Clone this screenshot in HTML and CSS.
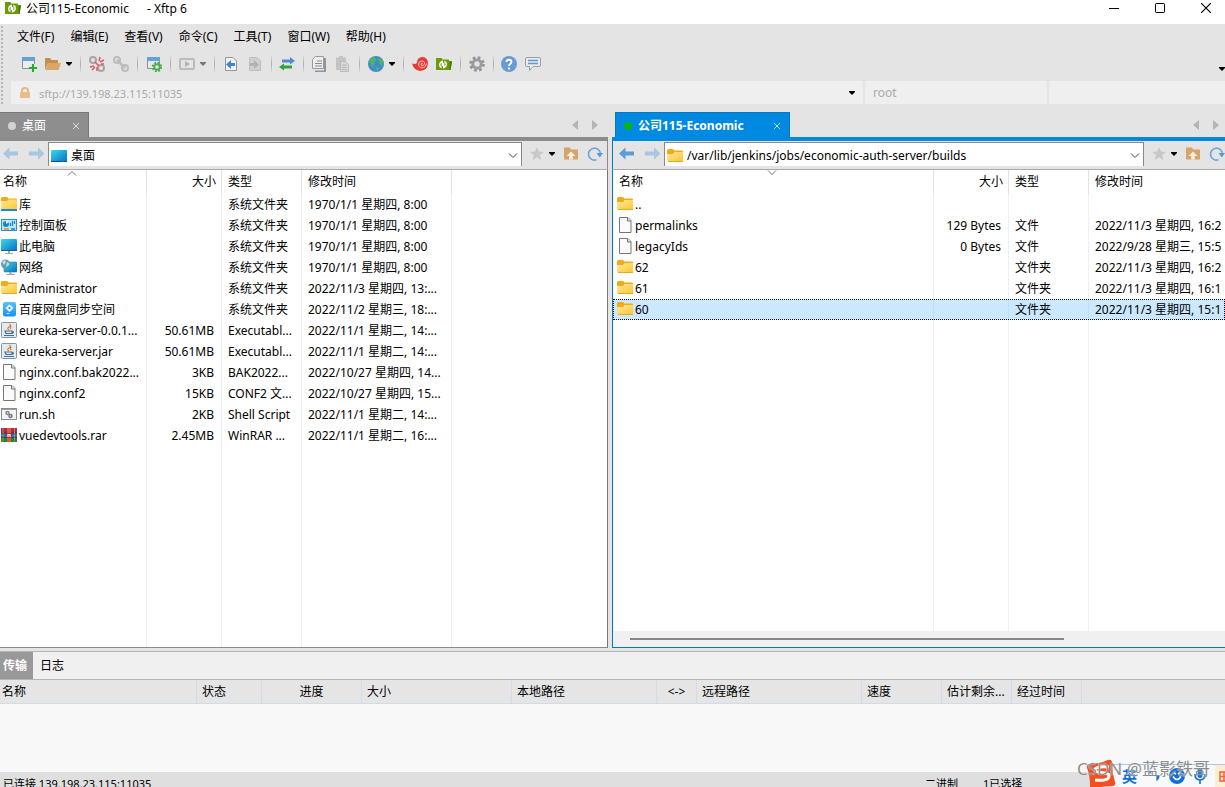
FILE: index.html
```html
<!DOCTYPE html>
<html lang="zh-CN">
<head>
<meta charset="utf-8">
<title>公司115-Economic - Xftp 6</title>
<link rel="stylesheet" href="styles.css">
</head>
<body>
<svg class="sprite" aria-hidden="true">
  <defs>
    <linearGradient id="g-folder" x1="0" y1="0" x2="1" y2="1"><stop offset="0" stop-color="#ffe9a0"/><stop offset="1" stop-color="#ffc62e"/></linearGradient>
    <linearGradient id="g-screen" x1="0" y1="0" x2="1" y2="1"><stop offset="0" stop-color="#35dcec"/><stop offset="1" stop-color="#0b6cc4"/></linearGradient>
    <linearGradient id="g-pan" x1="0" y1="0" x2="0" y2="1"><stop offset="0" stop-color="#55c4fb"/><stop offset="1" stop-color="#1593f5"/></linearGradient>
  </defs>
  <symbol id="logo" viewBox="0 0 16 16"><path d="M0 2h5.500l1 1.500h6.500V5h3l-1.500 9H0z" fill="#6b9a0c"/><path d="M13.500 5.500H16L14.500 14h-1z" fill="#4c7600"/><path d="M5.600 11.500Q3.500 10.500 3.700 8.300 4 6 6.300 5.300V10M8.400 5.500q2.100 1 1.900 3.200-.300 2.300-2.600 3V7" fill="none" stroke="#fff" stroke-width="1.400"/></symbol>
  <symbol id="new" viewBox="0 0 16 16"><path d="M1.500 1.500h12v11h-12z" fill="#ececec" stroke="#8c9298"/><path d="M1 1h13v4H1z" fill="#5fa2dc"/><path d="M12 8v8M8 12h8" stroke="#e4e4e4" stroke-width="4"/><path d="M12 8v8M8 12h8" stroke="#1fae2e" stroke-width="2"/></symbol>
  <symbol id="open" viewBox="0 0 16 16"><path d="M0 2h5l1.500 2H13v3H3L0 14z" fill="#c48e4c"/><path d="M3.200 7H16l-2.500 7H.500z" fill="#dba767"/></symbol>
  <symbol id="chain" viewBox="0 0 16 16"><g fill="none" stroke="#bcbcbc" stroke-width="2"><circle cx="4" cy="4" r="3"/><circle cx="12" cy="12" r="3"/><path d="M4 4l8 8" stroke-width="2.500"/></g></symbol>
  <symbol id="unchain" viewBox="0 0 16 16"><g fill="none" stroke="#a5a5a5" stroke-width="2"><circle cx="4" cy="4" r="3"/><circle cx="12" cy="12" r="3"/></g><path d="M6 6l4 4M10 5l1-4M11 6l4-2M12 8h3M5 10l-4 1M6 11l-3 3M8 11v4" stroke="#e75555" stroke-width="1.500"/></symbol>
  <symbol id="props" viewBox="0 0 16 16"><path d="M1.500 1.500h12v11h-12z" fill="#e8e8e8" stroke="#8c9298"/><path d="M1 1h13v4H1z" fill="#5fa2dc"/><circle cx="11" cy="11" r="4" fill="none" stroke="#4eaa4e" stroke-width="2.500" stroke-dasharray="1.800 1.340"/><circle cx="11" cy="11" r="2.700" fill="#e8e8e8" stroke="#4eaa4e" stroke-width="1.800"/></symbol>
  <symbol id="play" viewBox="0 0 16 16"><rect x="1" y="3" width="14" height="10" rx="1" fill="none" stroke="#bcbcbc" stroke-width="2"/><path d="M6 5l5 3-5 3z" fill="#b4b4b4"/></symbol>
  <symbol id="pageleft" viewBox="0 0 16 16"><path d="M2.500 1.500H10l3.500 3.500v9.500h-11z" fill="#f1f1f1" stroke="#8f969c"/><path d="M3 8.500l5-4.500v3h4v3H8v3z" fill="#3b86d4"/></symbol>
  <symbol id="pageright" viewBox="0 0 16 16"><path d="M2.500 1.500H10l3.500 3.500v9.500h-11z" fill="#cfcfcf" stroke="#bebebe"/><path d="M12 8.500L7 4v3H3v3h4v3z" fill="#b3b3b3"/></symbol>
  <symbol id="swap" viewBox="0 0 16 16"><path d="M3 3.500h8V1l5 4-5 3.500V6.500H3z" fill="#4c8ed0"/><path d="M13 9.500H5V7.500L0 11l5 3.500v-2h8z" fill="#2fa536"/></symbol>
  <symbol id="copy" viewBox="0 0 16 16"><path d="M5 3h9v12.500H4" fill="none" stroke="#8f969c" stroke-width="2"/><path d="M4.500.500h8v12h-11v-9z" fill="#eee" stroke="#949a9f"/><path d="M6 5h5M4 7.500h7M4 10h7" stroke="#888"/></symbol>
  <symbol id="paste" viewBox="0 0 16 16"><path d="M1 1.500h10V14H1zM4 0h4v3H4z" fill="#c4c4c4"/><path d="M5.500 5.500h5l3 3v7h-8z" fill="#d8d8d8" stroke="#bbb"/><path d="M7 9h5M7 11.500h5M7 13.500h5" stroke="#b8b8b8"/></symbol>
  <symbol id="globe" viewBox="0 0 16 16"><circle cx="8" cy="8" r="8" fill="#4289d0"/><path d="M2 3l3-2 3 1 .500 2-2.500 2 1 2-2 1 1 3-2-1-2.500-4zM10 2l4 1 1.500 4-2 3-2-2-1-3zM8 11l3 .500v2l-2 1.500-1.500-2z" fill="#49b56a"/></symbol>
  <symbol id="swirl" viewBox="0 0 16 16"><path d="M0 7.500q3 1 5-.500Q5 1 10.500 1 16 1.500 16 7.500 15.500 14.500 8 15 2 14.500 0 7.500z" fill="#ec3934"/><path d="M10.500 7.500q-1-1-1.500.500 0 2 2 1.500 2-1 1.500-3-1-2-3.500-1.500Q6 6 6.500 9q1 3.500 5 2.500 2.500-1 3-4" fill="none" stroke="#f8d5d2" stroke-width=".900"/></symbol>
  <symbol id="gear" viewBox="0 0 16 16"><circle cx="8" cy="8" r="6.300" fill="none" stroke="#909498" stroke-width="3" stroke-dasharray="2.600 2.348"/><circle cx="8" cy="8" r="4.200" fill="none" stroke="#999da1" stroke-width="3"/></symbol>
  <symbol id="help" viewBox="0 0 16 16"><circle cx="8" cy="8" r="8" fill="#679bd2"/><path d="M5.500 6c0-3 5-3 5 0 0 1.800-2.500 1.800-2.500 4M8 11.500v2" fill="none" stroke="#fff" stroke-width="1.800"/></symbol>
  <symbol id="chat" viewBox="0 0 16 16"><path d="M2 1.500h12q1.500 0 1.500 1.500v6q0 1.500-1.500 1.500H8L4.500 14.500v-4H2Q.500 10.500.500 9V3Q.500 1.500 2 1.500z" fill="#ebebeb" stroke="#999fa5"/><path d="M3 4.500h10M3 7.500h10" stroke="#6296cf" stroke-width="1.500"/></symbol>
  <symbol id="lock" viewBox="0 0 12 12"><path d="M3 6V3.500q0-2.500 3-2.500t3 2.500V6" fill="none" stroke="#dfb98a" stroke-width="2"/><rect x="1" y="5" width="10" height="6" rx="1" fill="#e9bd85"/></symbol>
  <symbol id="back" viewBox="0 0 16 16"><path d="M0 7.500L6.500 1.500v4H15v4H6.500v4z" fill="currentColor"/></symbol>
  <symbol id="fwd" viewBox="0 0 16 16"><path d="M15.500 7.500L9 1.500v4H0v4h9v4z" fill="currentColor"/></symbol>
  <symbol id="star" viewBox="0 0 16 16"><path d="M8 1l1.900 4.600 5 .300-3.900 3.200 1.300 4.900L8 11.300 3.700 14 5 9.100 1.100 5.900l5-.300z" fill="#c8c8c8"/></symbol>
  <symbol id="up" viewBox="0 0 16 16"><path d="M1 1.500h6l1 2h7v10H1z" fill="#d6a468"/><path d="M8 5.500L3.500 10h2.700v3.500h3.600V10h2.700z" fill="#f7eee2"/></symbol>
  <symbol id="refresh" viewBox="0 0 16 16"><path d="M9.500 13.800A6 6 0 1 1 13.500 8" fill="none" stroke="#6ca6d8" stroke-width="1.600"/><path d="M9.500 7H16l-3.200 4.500z" fill="#5699d5"/></symbol>
  <symbol id="folder" viewBox="0 0 16 16"><path d="M0 2.500Q0 1 1.500 1H6l1.500 1.500H15q1 0 1 1V6H0z" fill="#f0ab16"/><path d="M0 6h6l1.500-2H16v9.500H1q-1 0-1-1z" fill="url(#g-folder)"/><path d="M1 13.500h15" stroke="#e4a824"/></symbol>
  <symbol id="library" viewBox="0 0 16 16"><path d="M0 2.500Q0 1 1.500 1H6l1.500 1.500H15q1 0 1 1V6H0z" fill="#f0ab16"/><path d="M0 5h6l1.500-1.500H16V13H0z" fill="url(#g-folder)"/><path d="M0 13h16v2H0z" fill="#1b8ad5"/></symbol>
  <symbol id="panel" viewBox="0 0 16 16"><rect x=".500" y="2.500" width="15" height="11" fill="#b6e8fb" stroke="#2d91cb"/><circle cx="5" cy="7" r="3" fill="#1583cb"/><path d="M5 7V3.500L8 5z" fill="#fff"/><path d="M9.500 9V6M11.500 9V4M13.500 7V4" stroke="#1583cb" stroke-width="1.200"/><path d="M3 12h5" stroke="#ee8a25" stroke-width="1.500"/><path d="M10 12h4" stroke="#1583cb" stroke-width="1.500"/></symbol>
  <symbol id="pc" viewBox="0 0 16 16"><rect y="1" width="16" height="12" rx="1" fill="url(#g-screen)"/><path d="M0 12.500h16" stroke="#15619e"/><path d="M7 13h2v2h3v1H4v-1h3z" fill="#9aa9b5"/></symbol>
  <symbol id="desktop" viewBox="0 0 16 12"><rect width="16" height="12" rx="1" fill="url(#g-screen)"/><path d="M0 11.500h10M11 11.500h1M13 11.500h1M15 11.500h1" stroke="#0a4f8e"/></symbol>
  <symbol id="net" viewBox="0 0 16 16"><rect x="3" y="3" width="13" height="10" rx="1" fill="url(#g-screen)" stroke="#126a98" stroke-width=".500"/><path d="M8.500 13h2v2h3v1h-8v-1h3z" fill="#92a1ac"/><circle cx="4.500" cy="5" r="4.500" fill="#5d9db8"/><path d="M1 3l3-2 1 2-2 3zM6 3l2 1v2L5 8z" fill="#c4dfe8"/></symbol>
  <symbol id="pan" viewBox="0 0 16 16"><rect x="2" y="1" width="13" height="14.500" rx="2" fill="url(#g-pan)"/><path d="M8.500 3.500l4 3.500-4 4-4-4z" fill="#fff"/><circle cx="8.500" cy="7" r="1.200" fill="#2c9cec"/><path d="M5.500 12.500h3" stroke="#c7e9ff"/></symbol>
  <symbol id="jar" viewBox="0 0 16 16"><rect x=".500" y=".500" width="15" height="15" rx="1" fill="#e2eaf0" stroke="#8095a6"/><path d="M8.500 2q2 1.500-.500 3T8 8M10.500 4q-2 1.200-.500 3" fill="none" stroke="#e27a2d" stroke-width="1.200"/><path d="M4 9h7v2.500H5zM11 9.500q3 0 0 2M3 13.500h10" fill="none" stroke="#46708f" stroke-width="1.200"/></symbol>
  <symbol id="file" viewBox="0 0 16 16"><path d="M2.500.500H11l3 3v12H2.500z" fill="#fafafa" stroke="#777"/><path d="M10.500.500V4H14" fill="#ddd" stroke="#777"/></symbol>
  <symbol id="sh" viewBox="0 0 16 16"><rect x=".500" y="2.500" width="15" height="11" fill="#f4f4f4" stroke="#8d8d8d"/><path d="M0 3h16" stroke="#888" stroke-width="1.500"/><circle cx="6.500" cy="7" r="1.500" fill="none" stroke="#888" stroke-width="1.500"/><circle cx="9.500" cy="10" r="1.500" fill="none" stroke="#68798b" stroke-width="1.500"/></symbol>
  <symbol id="rar" viewBox="0 0 16 16"><path d="M0 1h16v5H0z" fill="#a52d57"/><path d="M0 6h16v4.500H0z" fill="#3b62bd"/><path d="M0 10.500h16V15H0z" fill="#23803a"/><path d="M0 6h16M0 10.500h16" stroke="#262640" stroke-width=".800"/><path d="M2 1.500v13M13.500 1.500v13" stroke="#d9a83c" stroke-width="1" stroke-dasharray="2 1"/><path d="M6 1h4v14H6z" fill="#d66032"/><path d="M5.500 6h5v5h-5z" fill="#b32b21"/><path d="M7 10V7.500h2V10" fill="none" stroke="#fff" stroke-width="1.200"/></symbol>
  <symbol id="caret" viewBox="0 0 6 4"><path d="M0 0h6v1L3 4 0 1z" fill="currentColor"/></symbol>
  <symbol id="tri-l" viewBox="0 0 6 10"><path d="M6 0v10L0 5z" fill="#b5b5b5"/></symbol>
  <symbol id="tri-r" viewBox="0 0 6 10"><path d="M0 0v10l6-5z" fill="#b5b5b5"/></symbol>
  <symbol id="chev" viewBox="0 0 10 6"><path d="M1 .500L5 4.500 9 .500" fill="none" stroke="currentColor"/></symbol>
  <symbol id="chev-up" viewBox="0 0 10 6"><path d="M1 5.500l4-4 4 4" fill="none" stroke="currentColor"/></symbol>
  <symbol id="cross" viewBox="0 0 10 10"><path d="M0 0l10 10M10 0L0 10" stroke="currentColor" stroke-width="1.200"/></symbol>
</svg>

<header class="titlebar">
  <svg class="icon"><use href="#logo"/></svg>
  <h1 class="title"><span>公司115-Economic</span><span>- Xftp 6</span></h1>
  <div class="winbtns">
    <button aria-label="最小化"><svg width="10" height="10"><path d="M0 5.500h10" stroke="#000"/></svg></button>
    <button aria-label="最大化"><svg width="10" height="10"><rect x=".500" y=".500" width="9" height="9" rx="1" fill="none" stroke="#000"/></svg></button>
    <button aria-label="关闭"><svg width="10" height="10"><use href="#cross"/></svg></button>
  </div>
</header>

<div class="chrome">
  <nav class="menubar">
    <button>文件(F)</button><button>编辑(E)</button><button>查看(V)</button><button>命令(C)</button><button>工具(T)</button><button>窗口(W)</button><button>帮助(H)</button>
  </nav>
  <div class="toolbar">
    <button aria-label="新建"><svg class="icon"><use href="#new"/></svg></button>
    <button aria-label="打开"><svg class="icon"><use href="#open"/></svg></button>
    <button class="drop" aria-label="打开列表"><svg class="caret"><use href="#caret"/></svg></button>
    <span class="sep"></span>
    <button aria-label="断开"><svg class="icon"><use href="#unchain"/></svg></button>
    <button aria-label="重新连接"><svg class="icon"><use href="#chain"/></svg></button>
    <span class="sep"></span>
    <button aria-label="属性"><svg class="icon"><use href="#props"/></svg></button>
    <span class="sep"></span>
    <button aria-label="执行"><svg class="icon"><use href="#play"/></svg></button>
    <button class="drop dim" aria-label="执行列表"><svg class="caret"><use href="#caret"/></svg></button>
    <span class="sep"></span>
    <button aria-label="下载"><svg class="icon"><use href="#pageleft"/></svg></button>
    <button aria-label="上传"><svg class="icon"><use href="#pageright"/></svg></button>
    <span class="sep tight"></span>
    <button aria-label="同步"><svg class="icon"><use href="#swap"/></svg></button>
    <span class="sep tight"></span>
    <button aria-label="复制"><svg class="icon"><use href="#copy"/></svg></button>
    <button aria-label="粘贴"><svg class="icon"><use href="#paste"/></svg></button>
    <span class="sep"></span>
    <button aria-label="编码"><svg class="icon"><use href="#globe"/></svg></button>
    <button class="drop" aria-label="编码列表"><svg class="caret"><use href="#caret"/></svg></button>
    <span class="sep"></span>
    <button aria-label="Xshell"><svg class="icon"><use href="#swirl"/></svg></button>
    <button aria-label="Xftp"><svg class="icon"><use href="#logo"/></svg></button>
    <span class="sep"></span>
    <button aria-label="选项"><svg class="icon"><use href="#gear"/></svg></button>
    <span class="sep tight"></span>
    <button aria-label="帮助"><svg class="icon"><use href="#help"/></svg></button>
    <button aria-label="反馈"><svg class="icon"><use href="#chat"/></svg></button>
    <button class="more" aria-label="更多"><svg class="caret"><use href="#caret"/></svg></button>
  </div>
  <div class="address">
    <label class="host"><svg class="lock"><use href="#lock"/></svg><input aria-label="地址" placeholder="sftp://139.198.23.115:11035"><svg class="caret"><use href="#caret"/></svg></label>
    <input class="user" aria-label="用户名" placeholder="root">
    <input class="pass" aria-label="密码" type="password">
  </div>
</div>

<main class="panes">
  <section class="pane local">
    <div class="tabs">
      <button class="tab"><span class="dot"></span><span class="tabname">桌面</span><svg class="close"><use href="#cross"/></svg></button>
      <span class="scrollers"><svg><use href="#tri-l"/></svg><svg><use href="#tri-r"/></svg></span>
    </div>
    <div class="nav">
      <button class="faded" aria-label="后退"><svg class="icon"><use href="#back"/></svg></button>
      <button class="faded" aria-label="前进"><svg class="icon"><use href="#fwd"/></svg></button>
      <label class="path"><svg class="icon desk"><use href="#desktop"/></svg><input aria-label="本地路径" value="桌面"><svg class="chev"><use href="#chev"/></svg></label>
      <button aria-label="收藏"><svg class="icon"><use href="#star"/></svg></button>
      <button class="drop" aria-label="收藏列表"><svg class="caret"><use href="#caret"/></svg></button>
      <button aria-label="上级目录"><svg class="icon"><use href="#up"/></svg></button>
      <button aria-label="刷新"><svg class="icon"><use href="#refresh"/></svg></button>
    </div>
    <div class="listing">
      <table class="files">
        <colgroup><col class="w147"><col class="w75"><col class="w80"><col class="w150"><col></colgroup>
        <thead><tr><th>名称<svg class="sort"><use href="#chev-up"/></svg></th><th class="num">大小</th><th>类型</th><th>修改时间</th><th></th></tr></thead>
        <tbody>
          <tr><td><svg class="icon"><use href="#library"/></svg>库</td><td class="num"></td><td>系统文件夹</td><td>1970/1/1 星期四, 8:00</td><td></td></tr>
          <tr><td><svg class="icon"><use href="#panel"/></svg>控制面板</td><td class="num"></td><td>系统文件夹</td><td>1970/1/1 星期四, 8:00</td><td></td></tr>
          <tr><td><svg class="icon"><use href="#pc"/></svg>此电脑</td><td class="num"></td><td>系统文件夹</td><td>1970/1/1 星期四, 8:00</td><td></td></tr>
          <tr><td><svg class="icon"><use href="#net"/></svg>网络</td><td class="num"></td><td>系统文件夹</td><td>1970/1/1 星期四, 8:00</td><td></td></tr>
          <tr><td><svg class="icon"><use href="#folder"/></svg>Administrator</td><td class="num"></td><td>系统文件夹</td><td>2022/11/3 星期四, 13:...</td><td></td></tr>
          <tr><td><svg class="icon"><use href="#pan"/></svg>百度网盘同步空间</td><td class="num"></td><td>系统文件夹</td><td>2022/11/2 星期三, 18:...</td><td></td></tr>
          <tr><td><svg class="icon"><use href="#jar"/></svg>eureka-server-0.0.1...</td><td class="num">50.61MB</td><td>Executabl...</td><td>2022/11/1 星期二, 14:...</td><td></td></tr>
          <tr><td><svg class="icon"><use href="#jar"/></svg>eureka-server.jar</td><td class="num">50.61MB</td><td>Executabl...</td><td>2022/11/1 星期二, 14:...</td><td></td></tr>
          <tr><td><svg class="icon"><use href="#file"/></svg>nginx.conf.bak2022...</td><td class="num">3KB</td><td>BAK2022...</td><td>2022/10/27 星期四, 14...</td><td></td></tr>
          <tr><td><svg class="icon"><use href="#file"/></svg>nginx.conf2</td><td class="num">15KB</td><td>CONF2 文...</td><td>2022/10/27 星期四, 15...</td><td></td></tr>
          <tr><td><svg class="icon"><use href="#sh"/></svg>run.sh</td><td class="num">2KB</td><td>Shell Script</td><td>2022/11/1 星期二, 14:...</td><td></td></tr>
          <tr><td><svg class="icon"><use href="#rar"/></svg>vuedevtools.rar</td><td class="num">2.45MB</td><td>WinRAR ...</td><td>2022/11/1 星期二, 16:...</td><td></td></tr>
          <tr class="rest"><td></td><td></td><td></td><td></td><td></td></tr>
        </tbody>
      </table>
    </div>
  </section>

  <section class="pane remote">
    <div class="tabs">
      <button class="tab"><span class="dot"></span><span class="tabname">公司115-Economic</span><svg class="close"><use href="#cross"/></svg></button>
      <span class="scrollers"><svg><use href="#tri-l"/></svg><svg><use href="#tri-r"/></svg></span>
    </div>
    <div class="nav">
      <button class="bright" aria-label="后退"><svg class="icon"><use href="#back"/></svg></button>
      <button class="faded" aria-label="前进"><svg class="icon"><use href="#fwd"/></svg></button>
      <label class="path"><svg class="icon"><use href="#folder"/></svg><input aria-label="远程路径" value="/var/lib/jenkins/jobs/economic-auth-server/builds"><svg class="chev"><use href="#chev"/></svg></label>
      <button aria-label="收藏"><svg class="icon"><use href="#star"/></svg></button>
      <button class="drop" aria-label="收藏列表"><svg class="caret"><use href="#caret"/></svg></button>
      <button aria-label="上级目录"><svg class="icon"><use href="#up"/></svg></button>
      <button aria-label="刷新"><svg class="icon"><use href="#refresh"/></svg></button>
    </div>
    <div class="listing">
      <table class="files">
        <colgroup><col class="w321"><col class="w75"><col class="w80"><col></colgroup>
        <thead><tr><th>名称<svg class="sort"><use href="#chev"/></svg></th><th class="num">大小</th><th>类型</th><th>修改时间</th></tr></thead>
        <tbody>
          <tr><td><svg class="icon"><use href="#folder"/></svg>..</td><td class="num"></td><td></td><td></td></tr>
          <tr><td><svg class="icon"><use href="#file"/></svg>permalinks</td><td class="num">129 Bytes</td><td>文件</td><td>2022/11/3 星期四, 16:2</td></tr>
          <tr><td><svg class="icon"><use href="#file"/></svg>legacyIds</td><td class="num">0 Bytes</td><td>文件</td><td>2022/9/28 星期三, 15:5</td></tr>
          <tr><td><svg class="icon"><use href="#folder"/></svg>62</td><td class="num"></td><td>文件夹</td><td>2022/11/3 星期四, 16:2</td></tr>
          <tr><td><svg class="icon"><use href="#folder"/></svg>61</td><td class="num"></td><td>文件夹</td><td>2022/11/3 星期四, 16:1</td></tr>
          <tr class="selected"><td><svg class="icon"><use href="#folder"/></svg>60</td><td class="num"></td><td>文件夹</td><td>2022/11/3 星期四, 15:1</td></tr>
          <tr class="rest"><td></td><td></td><td></td><td></td></tr>
        </tbody>
      </table>
    </div>
    <div class="hscroll"><span class="thumb"></span></div>
  </section>
</main>

<section class="transfers">
  <div class="viewtabs"><button class="on">传输</button><button>日志</button></div>
  <table class="queue">
    <colgroup><col class="w197"><col class="w65"><col class="w100"><col class="w150"><col class="w145"><col class="w40"><col class="w165"><col class="w80"><col class="w70"><col class="w70"><col></colgroup>
    <thead><tr><th>名称</th><th>状态</th><th class="mid">进度</th><th>大小</th><th>本地路径</th><th class="mid">&lt;-&gt;</th><th>远程路径</th><th>速度</th><th>估计剩余...</th><th>经过时间</th><th></th></tr></thead>
  </table>
</section>

<footer class="status"><span>已连接 139.198.23.115:11035</span><span class="mode">二进制</span><span class="count">1已选择</span></footer>

<div class="ime">
  <svg class="sogou" viewBox="0 0 30 28"><path d="M3 5q10 0 19-4 4-1 4 3 0 10 3 19 1 4-3 4-10 0-18 3-4 0-4-3Q4 16 1 9q-1-3 2-4z" fill="#f4501f"/><path d="M23 8q-14-1-14 3c0 4 14 1 14 6 0 4-6 5-14 4" fill="none" stroke="#fff" stroke-width="3"/></svg>
  <span class="lang">英</span>
  <svg class="punct" viewBox="0 0 14 16"><circle cx="4" cy="4" r="1.500" fill="#126fd6"/><path d="M10 7h3.500q.500 4-3.500 6 1-3 0-6z" fill="#126fd6"/></svg>
  <svg class="face" viewBox="0 0 16 16"><circle cx="8" cy="8" r="8" fill="#126fd6"/><path d="M4 8.500q4 6 8 0M5 5l2 1M9 6l3-2" fill="none" stroke="#fff" stroke-width="1.600"/></svg>
  <svg class="mic" viewBox="0 0 12 16"><rect x="3.500" width="5" height="10" rx="2.500" fill="#126fd6"/><path d="M1 6q0 6 5 6t5-6M6 12v4" fill="none" stroke="#126fd6" stroke-width="1.600"/></svg>
  <svg class="keys" viewBox="0 0 10 22"><path d="M0 0h10v22H0z" fill="#fdeed3"/><path d="M5 7h8v9H5zM5 11.500h5M9 7v9" fill="none" stroke="#ef6335" stroke-width="1.500"/></svg>
</div>
<div class="watermark">CSDN @蓝影铁哥</div>
</body>
</html>
```
FILE: styles.css
```css
* { box-sizing: border-box; }

html, body { height: 100%; }

body {
  margin: 0;
  display: flex;
  flex-direction: column;
  overflow: hidden;
  background: #e4e4e4;
  color: #000;
  font: 12px/20px "Noto Sans", "Noto Sans CJK SC", sans-serif;
}

button, input {
  font: inherit;
  color: inherit;
  border: 0;
  padding: 0;
  background: none;
  border-radius: 0;
}

button { flex: none; display: flex; align-items: center; }
input { min-width: 0; outline: 0; }
svg { flex: none; display: block; }
.sprite { position: absolute; width: 0; height: 0; }
.icon { width: 16px; height: 16px; }
.caret { width: 6px; height: 4px; }

/* window title */
.titlebar {
  flex: none;
  height: 24px;
  display: flex;
  align-items: flex-start;
  gap: 5px;
  padding-left: 5px;
  background: #fff;
}
.title {
  margin: 0;
  display: flex;
  flex: 1;
  gap: 18px;
  font-size: 12px;
  font-weight: 400;
  line-height: 18px;
}
.winbtns { display: flex; gap: 36px; padding: 3px 14px 0 0; }

/* menus and tools */
.chrome { flex: none; padding-bottom: 8px; position: relative; }
.chrome::before {
  content: "";
  position: absolute;
  left: 1px;
  top: 2px;
  bottom: 8px;
  width: 2px;
  background: repeating-linear-gradient(#b8b8b8 0 2px, transparent 2px 4px);
}
.menubar {
  display: flex;
  gap: 16px;
  height: 25px;
  padding-left: 17px;
}
.toolbar {
  display: flex;
  align-items: center;
  gap: 8px;
  height: 32px;
  padding: 0 0 2px 21px;
}
.sep {
  width: 1px;
  height: 18px;
  background: linear-gradient(#dcdcdc, #aaa, #dcdcdc);
}
.tight { margin-right: -1px; }
.drop { margin-left: -3px; }
.dim { color: #777; }
.more { margin-left: auto; align-self: flex-end; padding-bottom: 8px; }
.address {
  display: grid;
  grid-template-columns: minmax(0, 852fr) minmax(0, 182fr) minmax(0, 176fr);
  gap: 2px;
  height: 23px;
  padding-left: 11px;
}
.address input::placeholder { color: #aaa; opacity: 1; }
.host {
  display: flex;
  align-items: center;
  padding: 0 8px;
  background: #efefef;
}
.host input { flex: 1; padding: 2px 0 0 8px; font-size: 11px; }
.lock { width: 12px; height: 12px; }
.user { padding-left: 8px; background: #efefef; }
.pass { background: #efefef; }

/* file panes */
.panes {
  flex: 1;
  min-height: 0;
  display: grid;
  grid-template-columns: minmax(0, 608fr) minmax(0, 613fr);
  gap: 4px;
}
.pane { min-height: 0; display: flex; flex-direction: column; }
.tabs {
  flex: none;
  display: flex;
  align-items: stretch;
  justify-content: space-between;
  height: 29px;
}
.tab {
  gap: 6px;
  padding: 2px 9px 0 8px;
  border: 1px solid;
  border-bottom: 0;
  color: #fff;
  text-align: left;
}
.tabname { flex: 1; }
.dot { width: 8px; height: 8px; border-radius: 50%; }
.close { width: 6px; height: 6px; }
.scrollers { display: flex; align-items: center; gap: 14px; margin-right: 10px; }
.scrollers svg { width: 6px; height: 10px; }
.local .tabs { border-bottom: 4px solid #8b8b8b; }
.local .tab { width: 89px; background: #8e8e8e; border-color: #777; border-left: 0; }
.local .dot { background: #d3d3d3; }
.remote .tabs { border-bottom: 4px solid #0089e1; }
.remote .tab { width: 175px; margin-left: 3px; background: #0089e1; border-color: #0079c8; font-weight: 700; }
.remote .dot { background: #08b414; }
.remote .scrollers { margin-right: 6px; }

.nav {
  flex: none;
  display: flex;
  align-items: center;
  gap: 8px;
  height: 29px;
  padding: 0 4px 3px 3px;
  border-bottom: 1px solid #aaa;
}
.remote .nav { padding: 0 0 3px 6px; border-left: 1px solid #0079c8; }
.local .nav { border-right: 1px solid #8b8b8b; }
.faded { color: #a6c6e1; margin-right: 2px; }
.bright { color: #5b9dd9; margin-right: 2px; }
.path {
  flex: 1;
  min-width: 0;
  align-self: stretch;
  display: flex;
  align-items: center;
  gap: 4px;
  margin: 1px -1px 0 -7px;
  padding: 2px 3px 0 2px;
  background: #fff;
  border: 1px solid #8a8a8a;
  border-bottom: 0;
}
.path input { flex: 1; }
.desk { height: 12px; }
.chev { width: 10px; height: 6px; color: #444; }
.nav .drop { margin-left: -4px; }

.listing { flex: 1; min-height: 0; overflow: hidden; background: #fff; }
.local .listing { border-right: 1px solid #777; border-bottom: 1px solid #8b8b8b; }
.remote .listing { border-left: 1px solid #0079c8; }

table { table-layout: fixed; width: 100%; border-collapse: separate; border-spacing: 0; }
th, td {
  overflow: hidden;
  white-space: nowrap;
  text-align: left;
  font-weight: 400;
}
.files { height: 100%; }
.files th {
  position: relative;
  height: 24px;
  padding: 0 6px;
  border-right: 1px solid #e2e2e2;
}
.files th:first-child { padding-left: 3px; }
.files td {
  height: 21px;
  padding: 0 6px;
  line-height: 20px;
  border-right: 1px solid #e8f1fc;
}
.files td:first-child { padding: 0 0 0 1px; }
.remote .files th:first-child { padding-left: 6px; }
.remote .files td:first-child { padding-left: 4px; }
.files th:last-child, .files td:last-child { border-right: 0; padding-right: 0; }
.files td .icon { display: inline-block; vertical-align: middle; margin: -2px 2px 0 0; }
.files th.num { text-align: right; padding-right: 5px; }
.files td.num { text-align: right; padding-right: 7px; }
.files .rest td { height: auto; }
.selected { background: #cce8ff; outline: 1px dotted #000; outline-offset: -1px; }
.selected td { border-color: #bcdffb; }
.sort { position: absolute; left: 50%; top: 0; width: 10px; height: 6px; margin-left: -6px; color: #777; }

.w40 { width: 40px; } .w65 { width: 65px; } .w70 { width: 70px; }
.w75 { width: 75px; } .w80 { width: 80px; } .w100 { width: 100px; }
.w145 { width: 145px; } .w147 { width: 147px; } .w150 { width: 150px; }
.w165 { width: 165px; } .w197 { width: 197px; } .w321 { width: 321px; }

.hscroll {
  flex: none;
  height: 17px;
  padding: 7px 17px;
  background: #f0f0f0;
  border-left: 1px solid #0079c8;
  border-bottom: 1px solid #0079c8;
}
.thumb { display: block; width: 75%; height: 2px; background: #868686; }

/* transfer queue */
.transfers {
  flex: none;
  height: 121px;
  margin-top: 3px;
  border-top: 1px solid #b4b4b4;
  background: #f8f8f8;
}
.viewtabs {
  display: flex;
  height: 28px;
  background: #f0f0f0;
  border-bottom: 1px solid #b4b4b4;
}
.viewtabs button { padding: 0 4px 0 7px; }
.viewtabs .on { padding: 0 6px 0 3px; background: #999; color: #fff; font-weight: 700; }
.queue th {
  height: 24px;
  padding: 0 5px;
  background: #e5e5e5;
  border-right: 1px solid #d2dbe8;
  border-bottom: 1px solid #d2dbe8;
}
.queue th:first-child { padding-left: 2px; }
.queue th:last-child { border-right: 0; }
.queue th.mid { text-align: center; }

.status {
  flex: none;
  display: flex;
  height: 15px;
  padding-left: 3px;
  overflow: hidden;
  background: #dfdfdf;
  font-size: 11px;
  line-height: 24px;
}
.mode { margin-left: auto; width: 58px; }
.count { width: 242px; }

/* input-method bar floating over the window */
.ime {
  position: absolute;
  right: 0;
  bottom: 0;
  width: 139px;
  height: 23px;
  display: flex;
  align-items: center;
  gap: 9px;
  background:
    linear-gradient(#a9c7ea, #a9c7ea) 26px 0 / 100% 1px no-repeat,
    linear-gradient(#f8f9fb, #f8f9fb) 26px 0 no-repeat;
}
.sogou { width: 30px; height: 28px; align-self: flex-end; }
.lang { margin-left: -3px; color: #126fd6; font-size: 15px; font-weight: 700; }
.punct { width: 14px; height: 16px; }
.face { width: 16px; height: 16px; }
.mic { width: 12px; height: 16px; }
.keys { width: 10px; height: 22px; }
.watermark {
  position: absolute;
  right: 15px;
  bottom: 7px;
  color: #8d8d8d;
  font-size: 17px;
  line-height: 22px;
  text-shadow: 0 0 1px #fff;
}
```
